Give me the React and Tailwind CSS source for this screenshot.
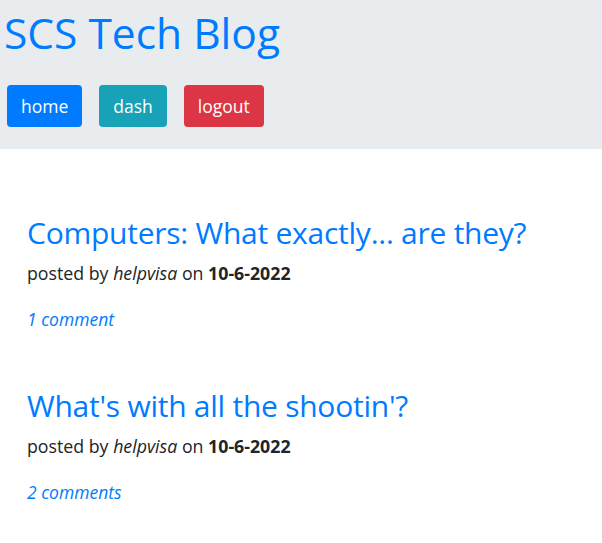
export default function App() {
  const font = { fontFamily: '"Open Sans", "Noto Sans", sans-serif' };
  return (
    <div className="min-h-[543px] bg-white text-[#212529]" style={font}>
      <header className="bg-[#e9ecef] h-[149px] pl-[4px] pt-[8px]">
        <h1 className="text-[42.5px] leading-[50px] text-[#007bff]">SCS Tech Blog</h1>
        <nav className="flex gap-[17px] mt-[27px] pl-[3px]">
          <a className="h-[42px] px-[14px] flex items-center rounded-[4px] bg-[#007bff] text-white text-[17.5px]">home</a>
          <a className="h-[42px] px-[14px] flex items-center rounded-[4px] bg-[#17a2b8] text-white text-[17.5px]">dash</a>
          <a className="h-[42px] px-[14px] flex items-center rounded-[4px] bg-[#dc3545] text-white text-[17.5px]">logout</a>
        </nav>
      </header>
      <main className="pl-[27px] pt-[65px]">
        {[
          ["Computers: What exactly... are they?", "1 comment"],
          ["What's with all the shootin'?", "2 comments"],
        ].map(([t, c], i) => (
          <article key={i} className={i === 0 ? "" : "mt-[56px]"}>
            <h2 className="text-[30px] leading-[38px] text-[#007bff] tracking-[-0.25px]">{t}</h2>
            <p className="mt-[9px] text-[17.75px] leading-[24px]">
              posted by <em>helpvisa</em> on <strong>10-6-2022</strong>
            </p>
            <p className="mt-[22px] text-[17.5px] leading-[24px] italic text-[#007bff]">{c}</p>
          </article>
        ))}
      </main>
    </div>
  );
}
